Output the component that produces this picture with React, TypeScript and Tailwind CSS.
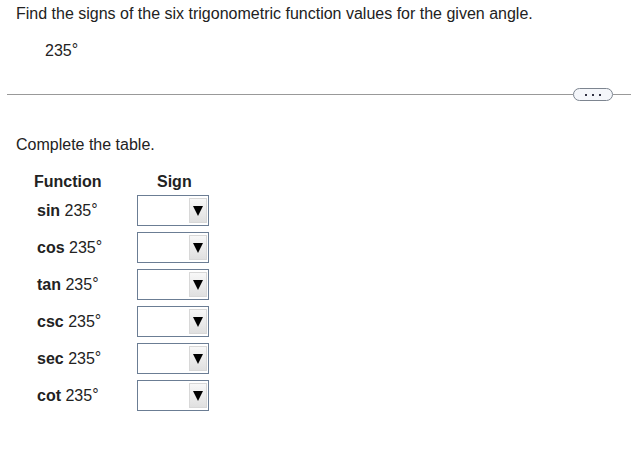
const rows = ["sin", "cos", "tan", "csc", "sec", "cot"];

function Deg({ fn }: { fn: string }) {
  return (
    <span className="whitespace-nowrap">
      <b className="font-bold">{fn}</b> 235<sup className="relative -top-[1px] text-[16px]">°</sup>
    </span>
  );
}

function SignSelect() {
  return (
    <div className="w-[72px] h-[31px] border border-[#6b7d94] bg-white flex items-center justify-end pr-[1px]">
      <div className="w-[18px] h-[25px] border border-[#d8d8d8] bg-gradient-to-b from-[#f8f8f8] to-[#e0e0e0] flex items-center justify-center">
        <svg width="10" height="10" viewBox="0 0 10 10">
          <polygon points="0,0 10,0 5,10" fill="#000" />
        </svg>
      </div>
    </div>
  );
}

export default function App() {
  return (
    <div className="w-[631px] h-[450px] bg-white text-[#222] font-['Liberation_Sans',Arial,sans-serif] text-[16px]">
      <div className="pl-4 pt-[5px] leading-[18px]">
        Find the signs of the six trigonometric function values for the given angle.
      </div>
      <div className="pl-[45px] pt-[19px] leading-[18px]">
        235<sup className="relative -top-[1px] text-[16px]">°</sup>
      </div>
      <div className="flex items-center mt-[28px] pl-[7px]">
        <div className="flex-1 h-px bg-[#999]" />
        <div className="w-[40px] h-[13px] rounded-full border border-[#7d8590] bg-[#f4f6fa] flex items-center justify-center gap-[5px]">
          <span className="w-[2px] h-[2px] bg-[#334]" />
          <span className="w-[2px] h-[2px] bg-[#334]" />
          <span className="w-[2px] h-[2px] bg-[#334]" />
        </div>
        <div className="w-[18px] h-px bg-[#999]" />
      </div>
      <div className="pl-4 pt-[35px] leading-[18px]">Complete the table.</div>
      <div className="mt-[19px] grid grid-cols-[103px_72px] pl-[34px]">
        <div className="font-bold leading-[18px] h-[22px]">Function</div>
        <div className="font-bold leading-[18px] h-[22px] pl-[20px]">Sign</div>
        {rows.map((r) => (
          <div key={r} className="contents">
            <div className="h-[37px] pl-[3px] pb-[6px] flex items-center leading-[18px]">
              <Deg fn={r} />
            </div>
            <div className="h-[37px]">
              <SignSelect />
            </div>
          </div>
        ))}
      </div>
    </div>
  );
}
